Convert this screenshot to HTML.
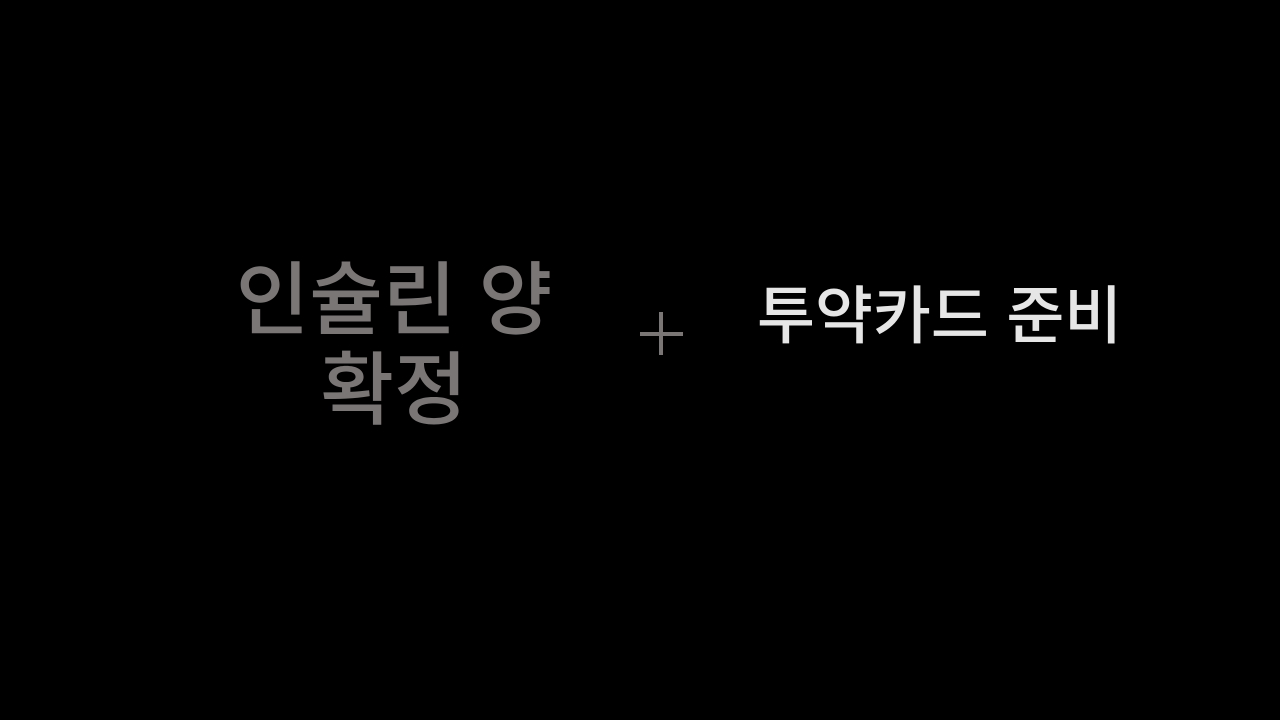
<!DOCTYPE html>
<html><head><meta charset="utf-8"><style>
html,body{margin:0;padding:0;background:#000;width:1280px;height:720px;overflow:hidden}
.t{position:absolute;font-family:"Liberation Sans","Noto Sans CJK KR",sans-serif;white-space:nowrap;font-weight:500}
#l{left:144px;top:256px;width:500px;text-align:center;font-size:80px;line-height:90px;color:#7a7676}
#r{left:757px;top:286px;font-size:63px;line-height:63px;color:#e6e6e6}
.p{position:absolute;background:#7a7676}
</style></head><body>
<div class="t" id="l">인슐린 양<br>확정</div>
<div class="p" style="left:640px;top:332px;width:43px;height:4px"></div>
<div class="p" style="left:659px;top:312px;width:4px;height:43px"></div>
<div class="t" id="r">투약카드 준비</div>
</body></html>
